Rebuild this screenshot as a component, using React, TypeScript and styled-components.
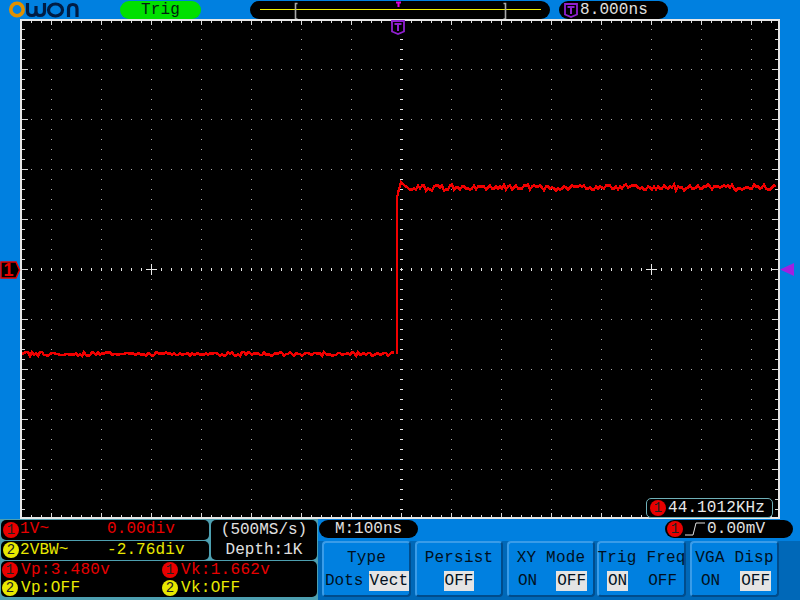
import React from "react";
import styled, { createGlobalStyle } from "styled-components";

const Global = createGlobalStyle`
  html, body { margin: 0; padding: 0; background: #0080e0; }
  #root { width: 800px; height: 600px; overflow: hidden; }
`;

const Device = styled.div`
  position: relative;
  width: 800px;
  height: 600px;
  background: #0080e0;
  font-family: "Liberation Mono", "DejaVu Sans Mono", monospace;
  font-size: 16px;
  overflow: hidden;
  display: flex;
  flex-direction: column;
`;

const TopBar = styled.div`
  height: 19px;
  display: flex;
  align-items: flex-start;
  padding-left: 9px;
`;

const Logo = styled.svg`
  width: 70px;
  height: 19px;
  flex: none;
`;

const TrigPill = styled.div`
  margin: 1px 0 0 41px;
  width: 81px;
  height: 18px;
  border-radius: 9px;
  background: #00e000;
  color: #002010;
  text-align: center;
  line-height: 18px;
  letter-spacing: 0.2px;
  flex: none;
`;

const TimelinePill = styled.svg`
  margin: 1px 0 0 49px;
  width: 300px;
  height: 18px;
  flex: none;
`;

const DelayPill = styled.div`
  margin: 1px 0 0 9px;
  width: 109px;
  height: 18px;
  border-radius: 9px;
  background: #000;
  color: #e0e0e0;
  display: flex;
  align-items: center;
  padding-left: 5px;
  gap: 2px;
  box-sizing: border-box;
  flex: none;
`;

const Readout = styled.span`
  letter-spacing: 0.1px;
  line-height: 18px;
`;

const Screen = styled.div`
  position: relative;
  margin-left: 20px;
  width: 760px;
  height: 500px;
  background: #000;
  flex: none;
`;

const Graticule = styled.svg`
  display: block;
  width: 760px;
  height: 500px;
`;

const FrequencyPill = styled.div`
  position: absolute;
  right: 7px;
  bottom: 1px;
  width: 127px;
  height: 20px;
  box-sizing: border-box;
  border: 1px solid #6fb0b8;
  border-radius: 5px;
  background: #000;
  color: #e8e8e8;
  display: flex;
  align-items: center;
  padding-left: 3px;
  gap: 2px;
`;

const Marker = styled.svg`
  position: absolute;
`;

const Bottom = styled.div`
  height: 81px;
  display: flex;
  flex: none;
`;

const InfoPanel = styled.div`
  width: 318px;
  height: 81px;
  background: #4d9fb0;
  padding: 1px 0 0 1px;
  box-sizing: border-box;
  display: grid;
  grid-template-columns: 208px 106px;
  grid-template-rows: 40px 36px;
  column-gap: 2px;
  row-gap: 1px;
  flex: none;
`;

const ChannelStack = styled.div`
  display: flex;
  flex-direction: column;
  gap: 1px;
`;

const ChannelRow = styled.div<{ $color: string }>`
  height: 19.5px;
  background: #000;
  border-radius: 5px;
  color: ${(p) => p.$color};
  display: flex;
  align-items: center;
  padding-left: 2px;
  white-space: nowrap;
  line-height: 19px;
`;

const ChannelName = styled.span`
  width: 87px;
  margin-left: 1px;
  letter-spacing: 0.1px;
`;

const Offset = styled.span`
  letter-spacing: 0.1px;
`;

const Sampling = styled.div`
  background: #000;
  border-radius: 5px;
  color: #e0e0e0;
  display: flex;
  flex-direction: column;
  align-items: center;
  justify-content: center;
  line-height: 20px;
`;

const Measurements = styled.div`
  grid-column: 1 / span 2;
  width: 316px;
  height: 36px;
  background: #000;
  border-radius: 5px;
  display: grid;
  grid-template-columns: 160px 1fr;
  grid-template-rows: 18px 18px;
  padding-left: 1px;
  box-sizing: border-box;
`;

const Measure = styled.div<{ $color: string }>`
  display: flex;
  align-items: center;
  gap: 3px;
  color: ${(p) => p.$color};
  letter-spacing: 0.3px;
`;

const RightSide = styled.div`
  flex: 1;
  display: flex;
  flex-direction: column;
  background: linear-gradient(#0080e0 22px, #0068b8 22px);
`;

const StatusRow = styled.div`
  height: 22px;
  display: flex;
  align-items: flex-start;
  padding: 1px 0 0 1px;
  box-sizing: border-box;
`;

const BlackPill = styled.div`
  height: 18px;
  background: #000;
  color: #e0e0e0;
  border-radius: 9px;
  display: flex;
  align-items: center;
  line-height: 18px;
  flex: none;
`;

const TimebasePill = styled(BlackPill)`
  width: 99px;
  justify-content: center;
`;

const TriggerPill = styled(BlackPill)`
  width: 128px;
  margin-left: 247px;
  padding-left: 2px;
  box-sizing: border-box;
  gap: 2px;
`;

const Menu = styled.div`
  display: flex;
  padding-left: 4px;
`;

const MenuButton = styled.div<{ $w: number; $gap: number }>`
  width: ${(p) => p.$w}px;
  margin-left: ${(p) => p.$gap}px;
  height: 56px;
  box-sizing: border-box;
  border-radius: 4px;
  background: #0080e0;
  border-top: 2px solid #3a9ce8;
  border-left: 2px solid #3a9ce8;
  border-right: 2px solid #004c8c;
  border-bottom: 2px solid #004c8c;
  color: #001020;
  display: flex;
  flex-direction: column;
  align-items: stretch;
  flex: none;
`;

const MenuTitle = styled.div`
  height: 28px;
  line-height: 30px;
  text-align: center;
  white-space: nowrap;
  letter-spacing: 0.2px;
  margin: 0 -2px;
`;

const Options = styled.div<{ $layout: "flush" | "pair" | "single" }>`
  display: flex;
  justify-content: ${(p) => (p.$layout === "single" ? "center" : "space-between")};
  padding: ${(p) => (p.$layout === "pair" ? "0 6px 0 8px" : "0")};
  align-items: center;
  height: 20px;
  white-space: nowrap;
`;

const Option = styled.span<{ $on?: boolean }>`
  background: ${(p) => (p.$on ? "#e4e4e4" : "transparent")};
  line-height: 20px;
  height: 20px;
  padding: 0 1px;
`;

const BadgeCircle = styled.span<{ $color: string }>`
  display: inline-flex;
  width: 16px;
  height: 16px;
  flex: none;
  border-radius: 50%;
  background: ${(p) => p.$color};
  color: #202020;
  font-size: 14px;
  align-items: center;
  justify-content: center;
  line-height: 16px;
`;

const RED = "#e80000";
const TRACE = "#f00000";
const YEL = "#e8e800";

function graticule() {
  const dots: React.ReactElement[] = [];
  const c = "#d8d8d8";
  for (let x = 31; x <= 751; x += 50) {
    if (x === 381) continue;
    for (let y = 10; y < 495; y += 10) {
      dots.push(<rect key={`v${x}-${y}`} x={x} y={y} width={1} height={1} fill="#a8a8a8" />);
    }
  }
  for (let y = 50; y <= 450; y += 50) {
    if (y === 250) continue;
    for (let x = 11; x < 750; x += 10) {
      dots.push(<rect key={`h${x}-${y}`} x={x} y={y} width={1} height={1} fill="#a8a8a8" />);
    }
  }
  for (let x = 11; x < 756; x += 10) {
    const major = (x - 31) % 50 === 0;
    const h = major ? 4 : 2;
    dots.push(<rect key={`t${x}`} x={x} y={2} width={1} height={h} fill={c} />);
    dots.push(<rect key={`b${x}`} x={x} y={498 - h} width={1} height={h} fill={c} />);
  }
  for (let y = 10; y < 495; y += 10) {
    const w = y % 50 === 0 ? 6 : 3;
    dots.push(<rect key={`l${y}`} x={2} y={y} width={w} height={1} fill={c} />);
    dots.push(<rect key={`r${y}`} x={758 - w} y={y} width={w} height={1} fill={c} />);
  }
  for (let x = 11; x < 752; x += 10) dots.push(<rect key={`cx${x}`} x={x} y={249} width={1} height={3} fill="#e8e8e8" />);
  for (let y = 10; y < 495; y += 10) dots.push(<rect key={`cy${y}`} x={380} y={y} width={3} height={1} fill="#e8e8e8" />);
  for (const cx of [131, 631]) {
    dots.push(<rect key={`c1${cx}`} x={cx - 5} y={250} width={11} height={1} fill="#e8e8e8" />);
    dots.push(<rect key={`c2${cx}`} x={cx} y={245} width={1} height={11} fill="#e8e8e8" />);
  }
  return dots;
}

function noise(i: number, seed: number) {
  const v = Math.sin(i * 12.9898 + seed) * 43758.5453;
  return v - Math.floor(v);
}

function wave() {
  let low = "M2 335";
  for (let x = 2; x < 376; x += 2) {
    const y = 335 + Math.round((noise(x, 1.3) - 0.5) * 4);
    low += ` L${x} ${y}`;
  }
  let high = "M378 177 L378 174 L381 163 L384 166 L388 169";
  for (let x = 390; x < 758; x += 2) {
    const y = 168.5 + Math.round((noise(x, 4.1) - 0.5) * 5.6);
    high += ` L${x} ${y}`;
  }
  return (
    <g shapeRendering="crispEdges" fill="none" stroke={TRACE} strokeWidth={2.4}>
      <path d={low} />
      <rect x={376} y={176} width={2} height={159} fill={TRACE} stroke="none" />
      <path d={high} />
    </g>
  );
}

const Ch = ({ n }: { n: 1 | 2 }) => <BadgeCircle $color={n === 1 ? RED : YEL}>{n}</BadgeCircle>;

const TMark = () => (
  <svg width={14} height={15} viewBox="0 0 14 15" style={{ flex: "none" }}>
    <path d="M1 1 H13 V11.5 L7 14 L1 11.5 Z" fill="#000" stroke="#9020d0" strokeWidth="1.8" />
    <path d="M3.5 4 H10.5 M7 4 V11" stroke="#9020d0" strokeWidth="2" fill="none" />
  </svg>
);

export default function App() {
  return (
    <Device>
      <Global />
      <TopBar>
        <Logo viewBox="0 0 70 19">
          <circle cx="8" cy="9.5" r="6.2" fill="none" stroke="#e09000" strokeWidth="3.6" />
          <path d="M18.5 3 V11 Q18.5 15.5 23 15.5 Q27 15.5 27 11 V6 M27 11 Q27 15.5 31 15.5 Q35.5 15.5 35.5 11 V3" fill="none" stroke="#001c44" strokeWidth="3.2" />
          <ellipse cx="46.5" cy="10" rx="7" ry="6" fill="none" stroke="#001c44" strokeWidth="3.2" />
          <path d="M59.5 17 V9 Q59.5 4.5 63.8 4.5 Q68 4.5 68 9 V17" fill="none" stroke="#001c44" strokeWidth="3.2" />
        </Logo>
        <TrigPill>Trig</TrigPill>
        <TimelinePill viewBox="0 0 300 18">
          <rect x="0" y="0" width="300" height="18" rx="9" fill="#000" />
          <rect x="10" y="8" width="281" height="1" fill="#f0f000" />
          <path d="M47.5 2.5 H45.5 V18 H47.5 M253.5 2.5 H255.5 V18 H253.5" stroke="#a8a8a8" strokeWidth="1.6" fill="none" />
          <path d="M146 1.5 H151 M148.5 1.5 V6" stroke="#e000e0" strokeWidth="2" fill="none" />
        </TimelinePill>
        <DelayPill>
          <TMark />
          <Readout>8.000ns</Readout>
        </DelayPill>
      </TopBar>
      <Screen>
        <Graticule viewBox="0 0 760 500">
          <rect x="1" y="1" width="758" height="498" fill="none" stroke="#e8e8e8" strokeWidth="2" />
          {graticule()}
          {wave()}
        </Graticule>
        <FrequencyPill>
          <Ch n={1} />
          <Readout>44.1012KHz</Readout>
        </FrequencyPill>
        <Marker style={{ left: 371, top: 1 }} width="14" height="15" viewBox="0 0 14 15">
          <path d="M1 1 H13 V11.5 L7 14 L1 11.5 Z" fill="#000" stroke="#9020d0" strokeWidth="1.8" />
          <path d="M3.5 4 H10.5 M7 4 V11" stroke="#9020d0" strokeWidth="2" fill="none" />
        </Marker>
        <Marker style={{ left: -20, top: 242 }} width="21" height="18" viewBox="0 0 21 18">
          <path d="M1 1 H16 L19.5 9 L16 17 H1 Z" fill="#000" stroke="#e80000" strokeWidth="1.5" />
          <text x="8.5" y="15" fontSize="18" fontWeight="700" fill="#e80000" textAnchor="middle" fontFamily="Liberation Sans">1</text>
        </Marker>
        <Marker style={{ left: 760, top: 244 }} width="14" height="13" viewBox="0 0 14 13">
          <path d="M0 6.5 L14 0 V13 Z" fill="#a020e0" />
        </Marker>
      </Screen>
      <Bottom>
        <InfoPanel>
          <ChannelStack>
            <ChannelRow $color="#e80000">
              <BadgeCircle $color={RED}>1</BadgeCircle>
              <ChannelName>1V~</ChannelName>
              <Offset>0.00div</Offset>
            </ChannelRow>
            <ChannelRow $color="#e8e800">
              <BadgeCircle $color={YEL}>2</BadgeCircle>
              <ChannelName>2VBW~</ChannelName>
              <Offset>-2.76div</Offset>
            </ChannelRow>
          </ChannelStack>
          <Sampling>
            <span>(500MS/s)</span>
            <span>Depth:1K</span>
          </Sampling>
          <Measurements>
            <Measure $color="#e80000"><Ch n={1} />Vp:3.480v</Measure>
            <Measure $color="#e80000"><Ch n={1} />Vk:1.662v</Measure>
            <Measure $color="#e8e800"><Ch n={2} />Vp:OFF</Measure>
            <Measure $color="#e8e800"><Ch n={2} />Vk:OFF</Measure>
          </Measurements>
        </InfoPanel>
        <RightSide>
          <StatusRow>
            <TimebasePill>M:100ns</TimebasePill>
            <TriggerPill>
              <Ch n={1} />
              <svg width="20" height="14" viewBox="0 0 20 14" style={{ flex: "none" }}>
                <path d="M0 13 H8 L11 1 H20" fill="none" stroke="#e0e0e0" strokeWidth="1" />
              </svg>
              <Readout>0.00mV</Readout>
            </TriggerPill>
          </StatusRow>
          <Menu>
            <MenuButton $w={89} $gap={0}>
              <MenuTitle>Type</MenuTitle>
              <Options $layout="flush"><Option>Dots</Option><Option $on>Vect</Option></Options>
            </MenuButton>
            <MenuButton $w={88} $gap={4}>
              <MenuTitle>Persist</MenuTitle>
              <Options $layout="single"><Option $on>OFF</Option></Options>
            </MenuButton>
            <MenuButton $w={88} $gap={4}>
              <MenuTitle>XY Mode</MenuTitle>
              <Options $layout="pair"><Option>ON</Option><Option $on>OFF</Option></Options>
            </MenuButton>
            <MenuButton $w={89} $gap={2}>
              <MenuTitle>Trig Freq</MenuTitle>
              <Options $layout="pair"><Option $on>ON</Option><Option>OFF</Option></Options>
            </MenuButton>
            <MenuButton $w={89} $gap={4}>
              <MenuTitle>VGA Disp</MenuTitle>
              <Options $layout="pair"><Option>ON</Option><Option $on>OFF</Option></Options>
            </MenuButton>
          </Menu>
        </RightSide>
      </Bottom>
    </Device>
  );
}
